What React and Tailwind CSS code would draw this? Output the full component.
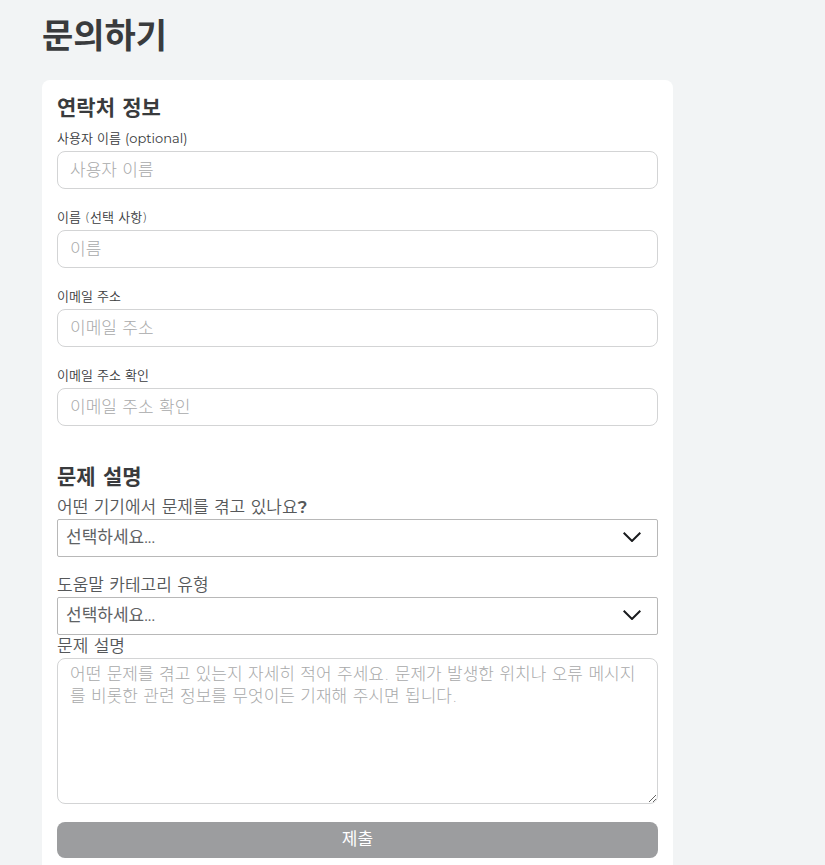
import { useState } from "react";

const contactFields = [
  { id: "username", label: "사용자 이름", note: "(optional)", placeholder: "사용자 이름", type: "text" },
  { id: "name", label: "이름 (선택 사항)", placeholder: "이름", type: "text" },
  { id: "email", label: "이메일 주소", placeholder: "이메일 주소", type: "email" },
  { id: "confirm-email", label: "이메일 주소 확인", placeholder: "이메일 주소 확인", type: "email" },
];

function TextField({ id, label, note, placeholder, type }) {
  return (
    <div className="flex flex-col mb-[17px]">
      <label
        htmlFor={id}
        className="font-['DejaVu_Sans','Noto_Sans_CJK_KR',sans-serif] text-[13px] leading-6 font-[350] text-[#393b3d]"
      >
        {label}
        {note && (
          <>
            {" "}
            <span className="font-['Montserrat','Noto_Sans_CJK_KR',sans-serif] leading-none font-normal">{note}</span>
          </>
        )}
      </label>
      <input
        id={id}
        type={type}
        placeholder={placeholder}
        className="h-[38px] w-full rounded-lg border border-[#d3d4d5] bg-white px-3 font-['DejaVu_Sans','Noto_Sans_CJK_KR',sans-serif] text-[17px] font-light text-[#393b3d] placeholder:text-[#a8a9aa]"
      />
    </div>
  );
}

function SelectField({ id, label, value, onChange }) {
  return (
    <div className="flex flex-col">
      <label
        htmlFor={id}
        className="font-['DejaVu_Sans','Noto_Sans_CJK_KR',sans-serif] text-[17px] leading-[23px] font-[350] text-[#56585a]"
      >
        {label}
      </label>
      <div className="relative">
        <select
          id={id}
          value={value}
          onChange={(e) => onChange(e.target.value)}
          className="block h-[38px] w-full appearance-none rounded-xs border border-[#b8b8b8] bg-white pl-2 pr-12 text-[17px] text-[#606264]"
        >
          <option value="">선택하세요...</option>
        </select>
        <svg
          viewBox="0 0 18 10"
          className="pointer-events-none absolute right-[17px] top-[13px] h-[10px] w-[18px]"
          fill="none"
          stroke="#191b1d"
          strokeWidth="2"
        >
          <path d="M0.7 0.7 9 9 17.3 0.7" />
        </svg>
      </div>
    </div>
  );
}

function SectionTitle({ children }) {
  return (
    <h2 className="mb-[5px] font-['DejaVu_Sans','Noto_Sans_CJK_KR',sans-serif] text-[21px] leading-7 font-bold text-[#393b3d]">
      {children}
    </h2>
  );
}

export default function App() {
  const [device, setDevice] = useState("");
  const [category, setCategory] = useState("");

  return (
    <div className="min-h-screen bg-[#f2f4f5] px-[42px] pt-3 font-['Montserrat','Noto_Sans_CJK_KR',sans-serif]">
      <h1 className="mb-5 text-[34px] leading-[48px] font-bold text-[#393b3d]">문의하기</h1>

      <form
        onSubmit={(e) => e.preventDefault()}
        className="w-full max-w-[631px] rounded-lg bg-white px-[15px] pt-[14px] pb-6"
      >
        {/* Contact information */}
        <section>
          <SectionTitle>연락처 정보</SectionTitle>
          {contactFields.map((field) => (
            <TextField key={field.id} {...field} />
          ))}
        </section>

        {/* Issue details */}
        <section className="pt-5">
          <SectionTitle>문제 설명</SectionTitle>
          <div className="flex flex-col gap-[17px]">
            <SelectField
              id="device"
              label={
                <>
                  어떤 기기에서 문제를 겪고 있나요
                  <span className="font-['Montserrat',sans-serif] leading-none font-semibold">?</span>
                </>
              }
              value={device}
              onChange={setDevice}
            />
            <SelectField
              id="category"
              label="도움말 카테고리 유형"
              value={category}
              onChange={setCategory}
            />
          </div>
          <label
            htmlFor="description"
            className="block font-['DejaVu_Sans','Noto_Sans_CJK_KR',sans-serif] text-[17px] leading-[23px] font-[350] text-[#56585a]"
          >
            문제 설명
          </label>
          <textarea
            id="description"
            placeholder="어떤 문제를 겪고 있는지 자세히 적어 주세요. 문제가 발생한 위치나 오류 메시지를 비롯한 관련 정보를 무엇이든 기재해 주시면 됩니다."
            className="block h-[146px] w-full resize rounded-lg border border-[#d3d4d5] bg-white px-3 py-1 font-['DejaVu_Sans','Noto_Sans_CJK_KR',sans-serif] text-[17px] leading-[22px] font-light break-all text-[#393b3d] placeholder:text-[#a8a9aa]"
          />
        </section>

        <button
          type="submit"
          className="mt-[18px] h-9 w-full rounded-lg bg-[#9c9d9f] text-[17px] text-white"
        >
          제출
        </button>
      </form>
    </div>
  );
}
